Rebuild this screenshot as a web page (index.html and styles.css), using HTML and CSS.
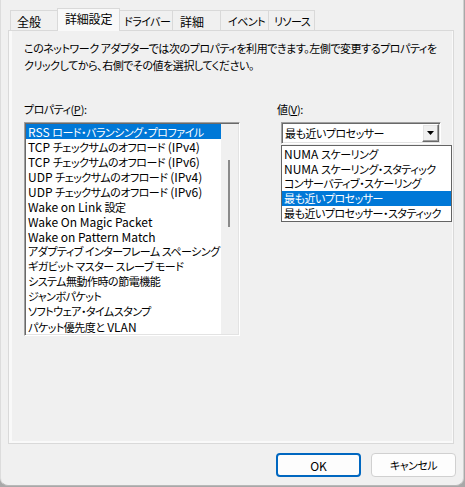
FILE: index.html
```html
<!DOCTYPE html>
<html lang="ja">
<head>
<meta charset="utf-8">
<link rel="stylesheet" href="styles.css">
</head>
<body>
<div class="window">
  <div class="tabs">
    <div class="tab t1">全般</div>
    <div class="tab active">詳細設定</div>
    <div class="tab t3">ドライバー</div>
    <div class="tab t4">詳細</div>
    <div class="tab t5">イベント</div>
    <div class="tab t6">リソース</div>
  </div>
  <div class="panel">
    <div class="page">
      <p class="desc">このネットワーク アダプターでは次のプロパティを利用できます。左側で変更するプロパティを<br>クリックしてから、右側でその値を選択してください。</p>
      <div class="cols">
        <div class="col-left">
          <div class="label">プロパティ(<u class="en">P</u>):</div>
          <div class="listbox">
            <div class="items">
              <div class="item sel"><span class="en">RSS </span>ロード・バランシング・プロファイル</div>
              <div class="item"><span class="en">TCP </span>チェックサムのオフロード<span class="en"> (IPv4)</span></div>
              <div class="item"><span class="en">TCP </span>チェックサムのオフロード<span class="en"> (IPv6)</span></div>
              <div class="item"><span class="en">UDP </span>チェックサムのオフロード<span class="en"> (IPv4)</span></div>
              <div class="item"><span class="en">UDP </span>チェックサムのオフロード<span class="en"> (IPv6)</span></div>
              <div class="item"><span class="en">Wake on Link </span>設定</div>
              <div class="item"><span class="en">Wake On Magic Packet</span></div>
              <div class="item"><span class="en">Wake on Pattern Match</span></div>
              <div class="item">アダプティブ インターフレーム スペーシング</div>
              <div class="item">ギガビット マスター スレーブ モード</div>
              <div class="item">システム無動作時の節電機能</div>
              <div class="item">ジャンボパケット</div>
              <div class="item">ソフトウェア・タイムスタンプ</div>
              <div class="item">パケット優先度と<span class="en"> VLAN</span></div>
            </div>
            <div class="vscroll"><div class="thumb"></div></div>
          </div>
        </div>
        <div class="col-right">
          <div class="label">値(<u class="en">V</u>):</div>
          <div class="combo">
            <div class="combo-text">最も近いプロセッサー</div>
            <div class="combo-btn"><svg width="7" height="4" viewBox="0 0 7 4"><path d="M0 0h7L3.5 4z" fill="#000"/></svg></div>
            <div class="droplist">
              <div class="ditem"><span class="en">NUMA </span>スケーリング</div>
              <div class="ditem"><span class="en">NUMA </span>スケーリング・スタティック</div>
              <div class="ditem">コンサーバティブ・スケーリング</div>
              <div class="ditem sel">最も近いプロセッサー</div>
              <div class="ditem">最も近いプロセッサー・スタティック</div>
            </div>
          </div>
        </div>
      </div>
    </div>
  </div>
  <div class="buttons">
    <button class="btn default"><span class="en">OK</span></button>
    <button class="btn">キャンセル</button>
  </div>
</div>
</body>
</html>
```
FILE: styles.css
```css
* { box-sizing: border-box; }
html, body { margin: 0; padding: 0; }
body {
  width: 465px;
  height: 487px;
  background: #a8a8a8;
  font-family: "Noto Sans CJK JP", sans-serif;
  font-size: 11px;
  letter-spacing: -0.5px;
  color: #000;
  font-feature-settings: "palt";
  overflow: hidden;
}
.en {
  font-size: 12px;
  letter-spacing: 0;
}
.window {
  width: 464px;
  height: 486px;
  background: #f0f0f0;
  border-left: 1px solid #dcdcdc;
  border-right: 1px solid #d0d0d0;
  border-bottom: 1px solid #b8b8b8;
  border-radius: 0 0 8px 8px;
  display: flex;
  flex-direction: column;
}
.tabs {
  display: flex;
  padding: 10px 0 0 9px;
  height: 30px;
  align-items: flex-end;
  position: relative;
  z-index: 2;
}
.tab {
  height: 20px;
  padding: 0 0 0 6px;
  border: 1px solid #d9d9d9;
  border-bottom: none;
  margin-left: -1px;
  background: #f0f0f0;
  line-height: 21px;
  text-align: left;
  white-space: nowrap;
}
.t1 { width: 48px; margin-left: 0; font-size: 12px; letter-spacing: 0; }
.t3 { width: 54px; padding-left: 4px; }
.t4 { width: 49px; font-size: 12px; letter-spacing: 0; padding-left: 7px; }
.t5 { width: 49px; padding-left: 7px; }
.t6 { width: 47px; padding-left: 5px; }
.tab.active {
  width: 63px;
  height: 23px;
  margin: 0 0 -1px -1px;
  padding-left: 7px;
  background: #f9f9f9;
  line-height: 20px;
  position: relative;
  z-index: 3;
  font-size: 12px;
  letter-spacing: -0.2px;
}
.panel {
  margin: 0 9px 0 7px;
  height: 414px;
  border: 1px solid #d9d9d9;
  background: #f9f9f9;
  padding: 0 1px 2px 3px;
  position: relative;
  z-index: 1;
}
.page {
  height: 100%;
  background: #f0f0f0;
  padding: 9px 0 0 12px;
}
.desc {
  margin: 0;
  line-height: 17px;
  letter-spacing: -0.45px;
  white-space: nowrap;
}
.cols {
  display: flex;
  margin-top: 27px;
}
.col-left { width: 216px; }
.col-right { margin-left: 37px; }
.label { line-height: 17px; height: 17px; }
.label u { font-size: 11px; }
.listbox {
  margin-top: 4px;
  height: 214px;
  width: 216px;
  background: #fff;
  border-top: 1px solid #a0a0a0;
  border-left: 1px solid #a0a0a0;
  border-right: 1px solid #fff;
  border-bottom: 1px solid #fff;
  box-shadow: inset 1px 1px 0 #696969, inset -1px -1px 0 #e3e3e3;
  padding: 1px;
  display: flex;
}
.items { flex: 1; overflow: hidden; }
.item {
  height: 15px;
  line-height: 15px;
  padding-left: 2px;
  white-space: nowrap;
}
.item.sel, .ditem.sel { background: #0078d7; color: #fff; }
.vscroll {
  width: 17px;
  background: #f0f0f0;
  position: relative;
}
.thumb {
  position: absolute;
  left: 7px;
  top: 36px;
  width: 2px;
  height: 67px;
  background: #8a8a8a;
}
.combo {
  margin: 4px 0 0 4px;
  width: 160px;
  height: 22px;
  background: #fff;
  border-top: 1px solid #a0a0a0;
  border-left: 1px solid #a0a0a0;
  border-right: 1px solid #fff;
  border-bottom: 1px solid #fff;
  box-shadow: inset 1px 1px 0 #696969, inset -1px -1px 0 #e3e3e3;
  display: flex;
  padding: 1px;
  position: relative;
}
.combo-text {
  flex: 1;
  line-height: 18px;
  padding-left: 2px;
  white-space: nowrap;
}
.combo-btn {
  width: 17px;
  height: 18px;
  background: #f0f0f0;
  border-top: 1px solid #fff;
  border-left: 1px solid #fff;
  border-right: 1px solid #696969;
  border-bottom: 1px solid #696969;
  box-shadow: inset -1px -1px 0 #a0a0a0, inset 1px 1px 0 #e3e3e3;
  display: flex;
  align-items: center;
  justify-content: center;
}
.droplist {
  position: absolute;
  left: -1px;
  top: 22px;
  width: 171px;
  background: #fff;
  border: 1px solid #646464;
  z-index: 5;
}
.ditem {
  height: 15px;
  line-height: 15px;
  padding-left: 2px;
  white-space: nowrap;
}
.buttons {
  display: flex;
  justify-content: flex-end;
  gap: 10px;
  padding: 9px 7px 0 0;
}
.btn {
  width: 85px;
  height: 24px;
  font: inherit;
  font-size: 11px;
  letter-spacing: -0.5px;
  background: #fdfdfd;
  border: 1px solid #d0d0d0;
  border-radius: 4px;
  color: #000;
  padding: 0;
}
.btn.default {
  border: 2px solid #0067c0;
}
```
